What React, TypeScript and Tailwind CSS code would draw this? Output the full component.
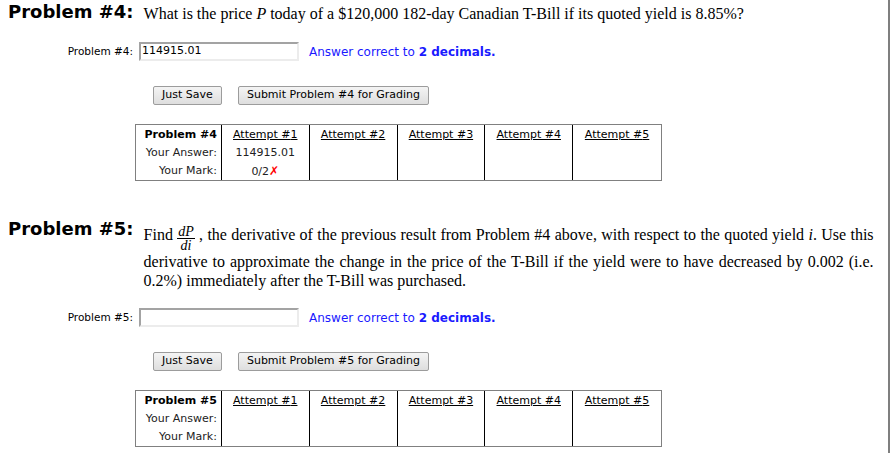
import React from "react";

const ui = { fontFamily: '"DejaVu Sans", Verdana, sans-serif' } as React.CSSProperties;
const serif = { fontFamily: '"Liberation Serif", "Times New Roman", serif' } as React.CSSProperties;

function AnswerRow({ n, value }: { n: number; value: string }) {
  return (
    <div className="flex items-center h-[19px]" style={ui}>
      <div className="w-[133px] text-right text-[10.5px] text-black whitespace-nowrap">Problem #{n}:</div>
      <div className="ml-[6px] w-[160px] h-[19px] border-2 border-t-[#a3a3a3] border-l-[#a3a3a3] border-r-[#ececec] border-b-[#ececec] bg-white flex items-center px-[1px] text-[11px] text-black">
        {value}
      </div>
      <div className="ml-[10px] text-[12px] text-[#1a1aff] whitespace-nowrap">
        Answer correct to <b>2 decimals.</b>
      </div>
    </div>
  );
}

function Buttons({ n }: { n: number }) {
  const btn =
    "h-[19px] text-[11px] text-black border border-[#9c9c9c] rounded-[2px] bg-gradient-to-b from-[#f4f4f4] to-[#dedede] flex items-center justify-center whitespace-nowrap";
  return (
    <div className="flex items-center pl-[153px]" style={ui}>
      <div className={btn + " w-[69px]"}>Just Save</div>
      <div className={btn + " ml-[16px] w-[191px]"}>Submit Problem #{n} for Grading</div>
    </div>
  );
}

function Table({ n, answer }: { n: number; answer?: string }) {
  const attempts = [1, 2, 3, 4, 5];
  return (
    <div className="ml-[135px] w-[527px] h-[57px] border border-[#808080] flex text-[11px] text-black whitespace-nowrap" style={ui}>
      <div className="w-[86px] flex flex-col items-end pr-[4px] pt-[1px] border-r border-black">
        <div className="h-[19px] leading-[18px] font-bold">Problem #{n}</div>
        <div className="h-[19px] leading-[18px] text-[#222]">Your Answer:</div>
        <div className="h-[19px] leading-[18px] text-[#222]">Your Mark:</div>
      </div>
      {attempts.map((a, i) => (
        <div
          key={a}
          className={"w-[88px] flex flex-col items-center pt-[1px] " + (i < 4 ? "border-r border-black" : "")}
        >
          <div className="h-[19px] leading-[18px] underline">Attempt #{a}</div>
          {a === 1 && answer ? (
            <>
              <div className="h-[19px] leading-[18px] text-[#222]">{answer}</div>
              <div className="h-[19px] leading-[18px] text-[#222]">
                0/2<span className="text-[#ff0000] text-[12px]">✗</span>
              </div>
            </>
          ) : null}
        </div>
      ))}
    </div>
  );
}

export default function App() {
  return (
    <div className="w-[890px] h-[453px] bg-white overflow-hidden">
      <div className="h-[453px] border-r-2 border-[#7f7f7f]" style={{ width: 890 }}>
        <div className="w-[888px]">
          {/* Problem 4 */}
          <div className="flex items-start pl-[8px] pt-[1px] h-[42px]">
            <div className="text-[18px] font-bold leading-[22px] text-black whitespace-nowrap" style={ui}>
              Problem #4:
            </div>
            <div className="ml-[10px] pt-[3px] text-[16px] leading-[20px] text-black whitespace-nowrap" style={serif}>
              What is the price <i>P</i> today of a $120,000 182-day Canadian T-Bill if its quoted yield is 8.85%?
            </div>
          </div>
          <AnswerRow n={4} value="114915.01" />
          <div className="h-[25px]" />
          <Buttons n={4} />
          <div className="h-[19px]" />
          <Table n={4} answer="114915.01" />

          {/* Problem 5 */}
          <div className="h-[36px]" />
          <div className="flex items-start pl-[8px] h-[91px]">
            <div className="text-[18px] font-bold leading-[22px] text-black pt-[1px] whitespace-nowrap" style={ui}>
              Problem #5:
            </div>
            <div className="ml-[10px] w-[730px] text-[16px] text-black" style={serif}>
              <div className="h-[33px] flex items-end leading-[20px]">
                <span className="w-full text-justify [text-align-last:justify]">
                  Find{" "}
                  <span className="inline-flex flex-col items-center align-middle text-[14px] leading-[13px] italic relative top-[2px]">
                    <span className="border-b border-black px-[1px]">dP</span>
                    <span>di</span>
                  </span>{" "}
                  , the derivative of the previous result from Problem #4 above, with respect to the quoted yield <i>i</i>. Use this
                </span>
              </div>
              <div className="text-justify [text-align-last:justify] leading-[20px] mt-[2px]">
                derivative to approximate the change in the price of the T-Bill if the yield were to have decreased by 0.002 (i.e.
              </div>
              <div className="leading-[17px]">0.2%) immediately after the T-Bill was purchased.</div>
            </div>
          </div>
          <AnswerRow n={5} value="" />
          <div className="h-[25px]" />
          <Buttons n={5} />
          <div className="h-[19px]" />
          <Table n={5} />
        </div>
      </div>
    </div>
  );
}
